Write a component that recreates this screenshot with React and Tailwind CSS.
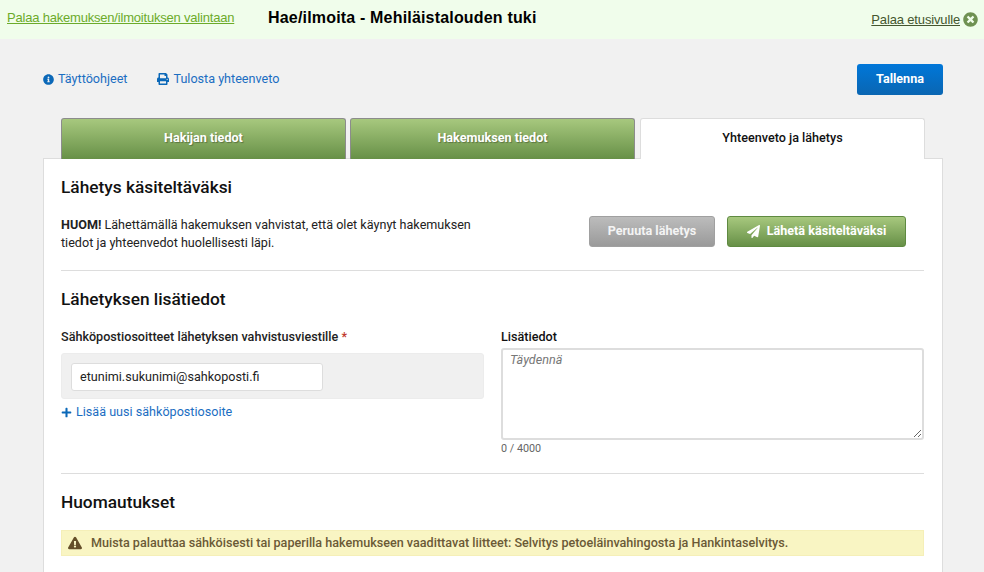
import React from "react";
import {
  FaExclamationTriangle,
  FaInfoCircle,
  FaPaperPlane,
  FaPlus,
  FaPrint,
  FaTimesCircle,
} from "react-icons/fa";

const greenGradient = "bg-[linear-gradient(#a7c87e,#679047)]";

const Tab = ({ children, active }) =>
  active ? (
    <div className="relative z-10 flex h-[41px] w-[285px] items-center justify-center rounded-t-[3px] border border-b-0 border-[#dddddd] bg-white pb-[2px] text-[12.6px] font-medium text-[#111]">
      {children}
    </div>
  ) : (
    <div
      className={`flex h-[41px] w-[285px] items-center justify-center rounded-t-[3px] border border-b-0 border-[#8c8c8c] ${greenGradient} pb-[2px] text-[12.6px] font-bold text-white [text-shadow:1px_1px_1px_rgba(0,0,0,0.3)]`}
    >
      {children}
    </div>
  );

const App = () => {
  return (
    <div className="h-[572px] overflow-hidden bg-[#f1f1f1] font-['Roboto',sans-serif] text-[12.6px] text-[#222]">
      <div className="flex h-[39px] items-center justify-between bg-[#f0fdeb] pl-[7px] pr-[6px] font-['Liberation_Sans',sans-serif]">
        <div className="flex items-center">
          <a className="mb-[4px] w-[261px] text-[13px] tracking-[-0.2px] text-[#6cab2a] underline">
            Palaa hakemuksen/ilmoituksen valintaan
          </a>
          <h1 className="mb-[3px] text-[16px] font-bold tracking-[0.18px] text-black">
            Hae/ilmoita - Mehiläistalouden tuki
          </h1>
        </div>
        <div className="flex items-center gap-[3px]">
          <a className="text-[13px] tracking-[-0.15px] text-[#44562f] underline">Palaa etusivulle</a>
          <FaTimesCircle className="text-[15px] text-[#6f9152]" />
        </div>
      </div>

      <div className="pl-[43px] pr-[41px]">
        <div className="flex h-[79px] items-start justify-between pt-[25px]">
          <div className="flex items-center gap-[30px] pt-[6px] text-[#1b6ec2]">
            <a className="flex items-center gap-[4px]">
              <FaInfoCircle className="text-[11px] text-[#0b68b8]" /> Täyttöohjeet
            </a>
            <a className="flex items-center gap-[4px]">
              <FaPrint className="text-[12px] text-[#0b68b8]" /> Tulosta yhteenveto
            </a>
          </div>
          <button className="h-[31px] w-[86px] rounded-[3px] bg-[linear-gradient(#0077d9,#0a66b2)] pb-px font-bold text-white">
            Tallenna
          </button>
        </div>

        <div className="flex gap-[4px] pl-[18px]">
          <Tab>Hakijan tiedot</Tab>
          <Tab>Hakemuksen tiedot</Tab>
          <div className="ml-px">
            <Tab active>Yhteenveto ja lähetys</Tab>
          </div>
        </div>

        <div className="-mt-px border border-[#dddddd] bg-white pl-[17px] pr-[18px] pt-[18px]">
          <h2 className="text-[17.3px] leading-[20px] font-medium text-[#111]">Lähetys käsiteltäväksi</h2>

          <div className="mt-[18px] flex items-start justify-between border-b border-[#dddddd] pb-[18px]">
            <p className="w-[430px] pt-px leading-[18px]">
              <span className="font-bold">HUOM!</span> Lähettämällä hakemuksen vahvistat, että olet käynyt hakemuksen
              tiedot ja yhteenvedot huolellisesti läpi.
            </p>
            <div className="mt-[1px] mr-[18px] flex gap-[12px]">
              <button className="h-[31px] w-[126px] rounded-[3px] border border-[#a0a0a0] bg-[linear-gradient(#bcbcbc,#9a9a9a)] font-bold text-[#f4f4f4]">
                Peruuta lähetys
              </button>
              <button
                className={`flex h-[31px] w-[179px] items-center justify-center gap-[7px] rounded-[3px] border border-[#5f8a41] ${greenGradient} font-bold text-white`}
              >
                <FaPaperPlane className="text-[13px]" /> Lähetä käsiteltäväksi
              </button>
            </div>
          </div>

          <h2 className="mt-[18px] text-[17.3px] leading-[20px] font-medium text-[#111]">Lähetyksen lisätiedot</h2>

          <div className="mt-[19px] grid grid-cols-[423px_423px] gap-[17px] border-b border-[#dddddd] pb-[17px]">
            <div>
              <label className="block leading-[18px] font-medium text-[#222]">
                Sähköpostiosoitteet lähetyksen vahvistusviestille <span className="text-[#c0392b]">*</span>
              </label>
              <div className="mt-[7px] rounded-[3px] border border-[#ececec] bg-[#f0f0f0] px-[9px] pt-[9px] pb-[7px]">
                <div className="flex h-[28px] w-[252px] items-center rounded-[3px] border border-[#dddddd] bg-white px-[8px] text-[#222]">
                  etunimi.sukunimi@sahkoposti.fi
                </div>
              </div>
              <a className="mt-[4px] flex items-center gap-[4px] leading-[18px] text-[#1b6ec2]">
                <FaPlus className="text-[11px] text-[#0b68b8]" /> Lisää uusi sähköpostiosoite
              </a>
            </div>
            <div>
              <label className="block leading-[18px] font-medium text-[#111]">Lisätiedot</label>
              <textarea
                readOnly
                placeholder="Täydennä"
                className="mt-[2px] block h-[92px] w-full rounded-[3px] border-2 border-[#dddddd] px-[7px] py-[1px] text-[12.6px] outline-none placeholder:text-[#777] placeholder:italic"
              />
              <div className="mt-[2px] text-[10.8px] leading-[14px] text-[#666]">0 / 4000</div>
            </div>
          </div>

          <h2 className="mt-[18px] text-[17.3px] leading-[20px] font-medium text-[#111]">Huomautukset</h2>

          <div className="mt-[18px] mb-[40px] flex h-[26px] items-center gap-[9px] border border-[#f5efb8] bg-[#f9f5c3] px-[6px] font-medium text-[#6b5a36]">
            <FaExclamationTriangle className="text-[14px] text-[#654f29]" />
            Muista palauttaa sähköisesti tai paperilla hakemukseen vaadittavat liitteet: Selvitys petoeläinvahingosta ja
            Hankintaselvitys.
          </div>
        </div>
      </div>
    </div>
  );
};

export default App;
